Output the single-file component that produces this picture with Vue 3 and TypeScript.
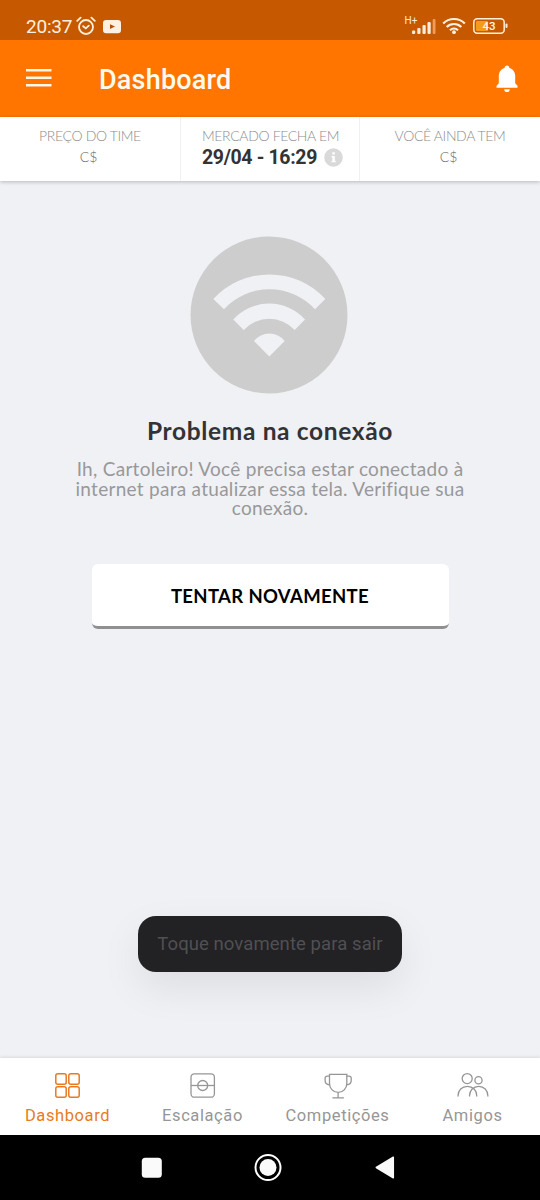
<script setup lang="ts">
interface Tab {
  id: string
  label: string
}

const tabs: Tab[] = [
  { id: 'dashboard', label: 'Dashboard' },
  { id: 'lineup', label: 'Escalação' },
  { id: 'cups', label: 'Competições' },
  { id: 'friends', label: 'Amigos' },
]
const activeTab = 'dashboard'
</script>

<template>
  <div class="screen">
    <div class="status">
      <span class="clock">20:37</span>
      <svg class="alarm" width="20" height="20" viewBox="0 0 20 20" fill="none" stroke="#fff0dc" stroke-width="1.8" stroke-linecap="round">
        <circle cx="10" cy="11" r="7" />
        <path d="M1.2 4.8 4.6 1.7M18.8 4.8 15.4 1.7M7.2 10.2 9.8 12.4 12.8 9.6" />
      </svg>
      <svg class="video" width="18" height="14" viewBox="0 0 18 14">
        <rect width="18" height="13.2" rx="3.2" fill="#fff0e4" />
        <path d="M7 4.3 12 6.6 7 9z" fill="#b65000" />
      </svg>
      <span class="spring"></span>
      <svg class="signal" width="32" height="20" viewBox="0 0 32 20" fill="#ffead8">
        <text x="0.500" y="9.300" class="network">H+</text>
        <rect x="8" y="15.500" width="3.200" height="3.500" rx="1" />
        <rect x="13.300" y="13" width="3.200" height="6" rx="1" />
        <rect x="18.500" y="10" width="3.200" height="9" rx="1" />
        <rect x="23.500" y="7" width="3.200" height="12" rx="1" />
        <rect x="28.700" y="4" width="2.800" height="15" rx="1" fill="#ee9b5c" />
      </svg>
      <svg class="wifi" width="24" height="18" viewBox="0 0 24 18" fill="none" stroke="#fff0df" stroke-width="2.2">
        <path d="M1.200 6.500A15.200 15.200 0 0 1 22.800 6.500M4.700 10A10.400 10.400 0 0 1 19.300 10M8 13.200A6 6 0 0 1 16 13.200" />
        <circle cx="12" cy="15.200" r="1.900" fill="#fff0df" stroke="none" />
      </svg>
      <svg class="battery" width="36" height="17" viewBox="0 0 36 17">
        <rect x="0.800" y="0.800" width="30.400" height="14.400" rx="3.500" fill="none" stroke="#fff0d8" stroke-width="1.500" />
        <rect x="3" y="3" width="12" height="10" rx="1" fill="#f59a1c" />
        <rect x="32.500" y="5.500" width="2" height="4.500" rx="1" fill="#ffead8" />
        <text x="16" y="12.300" text-anchor="middle" class="charge">43</text>
      </svg>
    </div>

    <header class="bar">
      <svg class="menu" width="26" height="18" viewBox="0 0 26 18" fill="#fff8e8">
        <path d="M0 0h25.500v2.600H0zM0 7.400h25.500V10H0zM0 15h25.500v2.600H0z" />
      </svg>
      <h1>Dashboard</h1>
      <svg class="bell" width="22" height="28" viewBox="0 0 22 28" fill="#fff">
        <path d="M11 0.500c1.400 0 2.400.9 2.400 2.500 3.700 1 5.800 4.100 5.800 8v7.300l2.300 2.500v1.900H.5v-1.900l2.300-2.500V11c0-3.900 2.100-7 5.800-8C8.600 1.400 9.600.5 11 .5z" />
        <path d="M8.200 24.200h5.600a2.800 2.800 0 0 1-5.600 0z" />
      </svg>
    </header>

    <section class="info">
      <div class="cell">
        <span class="label">PREÇO DO TIME</span>
        <span class="money">C$</span>
      </div>
      <div class="cell middle">
        <span class="label">MERCADO FECHA EM</span>
        <div class="deadline">
          <strong>29/04 - 16:29</strong>
          <svg width="19" height="19" viewBox="0 0 19 19">
            <circle cx="9.500" cy="9.500" r="9.300" fill="#d9d9d9" />
            <path d="M8.300 4.200h2.500v2.300H8.300zM7.600 8h3.200v4.700h.9v1.600H7.400v-1.600h1V9.500h-.8z" fill="#fff" />
          </svg>
        </div>
      </div>
      <div class="cell">
        <span class="label">VOCÊ AINDA TEM</span>
        <span class="money">C$</span>
      </div>
    </section>

    <main class="content">
      <svg class="offline" width="158" height="158" viewBox="0 0 158 158">
        <circle cx="79" cy="79" r="78.500" fill="#cdcdcd" />
        <g fill="#f0f1f4">
          <path d="M23.300 63A76 76 0 0 1 135.300 63L125 73.300A61.700 61.700 0 0 0 34 73.300z" />
          <path d="M43.300 83.500A48.400 48.400 0 0 1 115 83.500L104.700 94A34.700 34.700 0 0 0 53.700 94z" />
          <path d="M64 105A19.400 19.400 0 0 1 94.700 105L79.300 120.500z" />
        </g>
      </svg>
      <h2>Problema na conexão</h2>
      <p class="message">
        Ih, Cartoleiro! Você precisa estar conectado à internet para atualizar essa tela. Verifique sua conexão.
      </p>
      <button class="retry" type="button">TENTAR NOVAMENTE</button>
    </main>

    <nav class="tabs">
      <div v-for="tab in tabs" :key="tab.id" class="tab" :class="{ active: tab.id === activeTab }">
        <svg width="32" height="28" viewBox="0 0 32 28" fill="none" stroke="currentColor" stroke-width="1.300">
          <g v-if="tab.id === 'dashboard'" stroke-width="1.500">
            <rect x="3.800" y="1.800" width="10.400" height="10.400" rx="2" />
            <rect x="16.800" y="1.800" width="10.400" height="10.400" rx="2" />
            <rect x="3.800" y="14.800" width="10.400" height="10.400" rx="2" />
            <rect x="16.800" y="14.800" width="10.400" height="10.400" rx="2" />
          </g>
          <g v-else-if="tab.id === 'lineup'">
            <rect x="4" y="1.800" width="23.400" height="23.400" rx="3.500" />
            <circle cx="15.700" cy="13.500" r="5" />
            <path d="M4 13.500h23.400" />
          </g>
          <g v-else-if="tab.id === 'cups'" stroke-linecap="round">
            <path d="M7.500 2.300h17.300v9.200a8.600 8.900 0 0 1-17.300 0zM16.100 20.500v5.300M10.800 25.800h10.700M7.500 4.200H5.200a2 2 0 0 0-2.100 2v2.300c0 2.500 1.500 4 4.400 4.300M24.800 4.200h2.300a2 2 0 0 1 2.100 2v2.300c0 2.500-1.500 4-4.400 4.300" />
          </g>
          <g v-else stroke-linecap="round">
            <circle cx="10.200" cy="6.600" r="5" />
            <circle cx="21.500" cy="8.200" r="3.600" />
            <path d="M1 24c0-5.600 3.900-9.700 9.400-9.700s9.400 4.100 9.400 9.700M12.500 24c0-5.600 3.900-9.700 9.200-9.700s9.200 4.100 9.200 9.700" />
          </g>
        </svg>
        <span class="tab-label">{{ tab.label }}</span>
      </div>
    </nav>

    <div class="system">
      <svg width="22" height="22" viewBox="0 0 22 22"><rect x="0.800" y="0.800" width="20" height="20" rx="3.500" fill="#fafafa" /></svg>
      <svg width="28" height="28" viewBox="0 0 28 28">
        <circle cx="14" cy="13.500" r="12.500" fill="none" stroke="#fff" stroke-width="2" />
        <circle cx="14" cy="13.500" r="8.500" fill="#fafafa" />
      </svg>
      <svg width="22" height="24" viewBox="0 0 22 24"><path d="M3.300 11.500 20.300 1.200v20.600z" fill="#fafafa" stroke="#fafafa" stroke-width="1.500" stroke-linejoin="round" /></svg>
    </div>

    <div class="toast"><span>Toque novamente para sair</span></div>
  </div>
</template>

<style>
body {
  margin: 0;
}
</style>

<style scoped>
.screen {
  position: relative;
  display: flex;
  flex-direction: column;
  width: 540px;
  height: 1200px;
  overflow: hidden;
  background: #f0f1f4;
  font-family: Roboto, sans-serif;
}
.status {
  display: flex;
  align-items: flex-start;
  box-sizing: border-box;
  height: 40px;
  padding: 16px 31px 0 26px;
  background: #c65900;
  color: #fff0df;
}
.clock {
  width: 50px;
  font-size: 19px;
  line-height: 22px;
  letter-spacing: -0.2px;
}
.video {
  margin: 3.500px 0 0 7px;
}
.spring {
  flex: 1;
}
.signal {
  margin-right: 6px;
  margin-top: -1px;
}
.network {
  font: 10px Roboto, sans-serif;
}
.wifi {
  margin: 1px 7px 0 0;
}
.battery {
  margin-top: 2px;
}
.charge {
  font: 500 11.500px Roboto, sans-serif;
  fill: #fff5e6;
}
.bar {
  display: flex;
  align-items: center;
  box-sizing: border-box;
  height: 77px;
  padding: 0 22px 0 26px;
  background: #ff7500;
}
.menu {
  margin: -2px 47px 0 0;
}
h1 {
  flex: 1;
  margin: 3px 0 0;
  color: #fffaf0;
  font-size: 27px;
  font-weight: 500;
  line-height: 32px;
  letter-spacing: 0.2px;
}
.info {
  position: relative;
  display: grid;
  grid-template-columns: 1fr 1fr 1fr;
  height: 64px;
  background: #fff;
  box-shadow: 0 1px 4px rgba(0, 0, 0, 0.24);
}
.cell {
  display: flex;
  flex-direction: column;
  align-items: center;
  padding-top: 10px;
}
.middle {
  border-left: 1px solid #f1f1f1;
  border-right: 1px solid #f1f1f1;
}
.label,
.money {
  font-family: Lato, sans-serif;
  font-weight: 300;
  white-space: nowrap;
}
.label {
  color: #8c8c8c;
  font-size: 14px;
  line-height: 18px;
  letter-spacing: -0.35px;
}
.middle .label {
  margin-left: 1px;
}
.money {
  margin: 3px 3px 0 0;
  color: #666;
  font-size: 14px;
  line-height: 18px;
}
.deadline {
  display: flex;
  align-items: center;
  gap: 7px;
  margin: 3px 0 0 5px;
}
.deadline strong {
  color: #333;
  font: 700 19.500px/20px Roboto, sans-serif;
  letter-spacing: -0.35px;
  white-space: nowrap;
}
.deadline svg {
  margin-top: -2px;
}
.content {
  display: flex;
  flex: 1;
  flex-direction: column;
  align-items: center;
  padding-top: 55px;
  font-family: Lato, sans-serif;
}
.offline {
  margin-right: 1.400px;
}
h2 {
  margin: 22px 0 0;
  color: #333336;
  font-size: 24.500px;
  font-weight: 700;
  line-height: 30px;
  letter-spacing: 0.65px;
  white-space: nowrap;
}
.message {
  width: 400px;
  margin: 13px 0 0;
  color: #98989a;
  font-size: 19px;
  line-height: 19.500px;
  letter-spacing: 0.28px;
  text-align: center;
}
.retry {
  width: 357px;
  height: 65px;
  margin-top: 46px;
  padding: 2px 0 0;
  border: 0;
  border-bottom: 3px solid #909092;
  border-radius: 6px;
  background: #fff;
  color: #000;
  font: 700 18.500px Lato, sans-serif;
  letter-spacing: 0.35px;
}
.tabs {
  display: grid;
  grid-template-columns: repeat(4, 1fr);
  height: 77px;
  background: #fff;
  box-shadow: 0 -1px 3px rgba(0, 0, 0, 0.1);
}
.tab {
  display: flex;
  flex-direction: column;
  align-items: center;
  padding-top: 14px;
  color: #969696;
}
.active {
  color: #e77b22;
}
.tab-label {
  margin-top: 6px;
  font-size: 16.500px;
  line-height: 20px;
  letter-spacing: 0.6px;
}
.system {
  display: flex;
  align-items: center;
  box-sizing: border-box;
  height: 65px;
  padding-left: 141px;
  background: #000;
  gap: 91px;
}
.toast {
  position: absolute;
  left: 138px;
  top: 916px;
  width: 264px;
  height: 56px;
  border-radius: 18px;
  background: #222124;
  box-shadow: 0 16px 40px rgba(0, 0, 0, 0.08);
  color: #505053;
  font-size: 18.500px;
  line-height: 57px;
  letter-spacing: 0.08px;
  text-align: center;
  white-space: nowrap;
}
</style>
